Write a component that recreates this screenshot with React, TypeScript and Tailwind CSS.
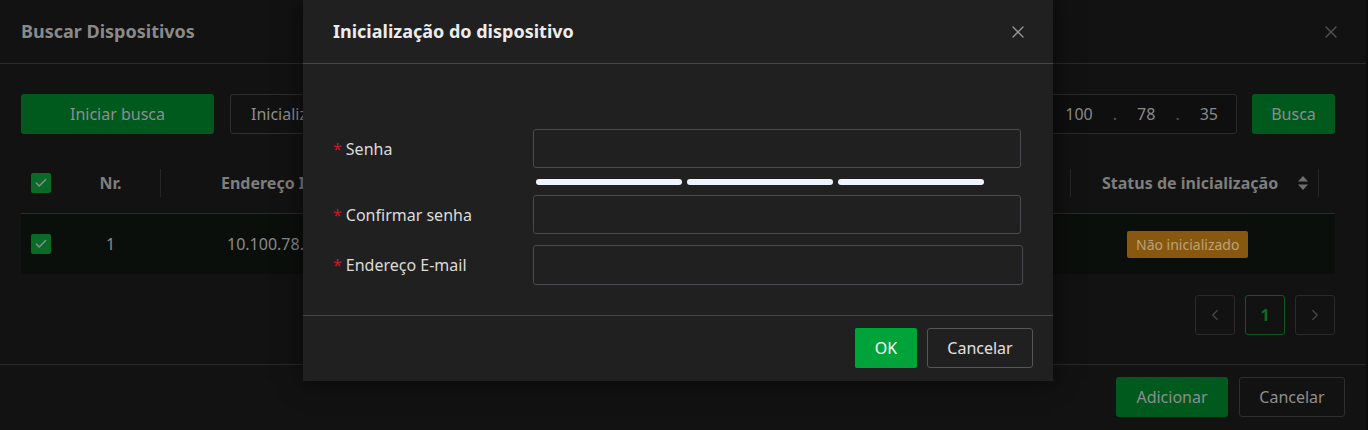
import { X, ChevronLeft, ChevronRight, Check } from 'lucide-react'

const font = { fontFamily: '"Noto Sans", "Segoe UI", Arial, sans-serif' }

function Checkbox() {
  return (
    <div className="flex h-[20px] w-[20px] items-center justify-center rounded-[2px] bg-[#0a6a28]">
      <Check className="h-[14px] w-[14px] text-[#8c8c8c]" strokeWidth={2.5} />
    </div>
  )
}

function SortIcon() {
  return (
    <svg viewBox="0 0 10 14" className="h-[14px] w-[10px]" fill="#6e6e6e">
      <path d="M5 0 L10 5.5 H0 Z" />
      <path d="M5 14 L10 8.5 H0 Z" />
    </svg>
  )
}

export default function App() {
  return (
    <div className="relative h-[430px] w-[1368px] overflow-hidden bg-[#0c0c0c]" style={font}>
      {/* ── Janela de fundo (escurecida) ── */}
      <div className="flex h-[430px] w-[1366px] flex-col bg-[#121212]">
        <div className="flex h-[64px] shrink-0 items-center justify-between border-b border-[#2b2b2b] pl-[21px] pr-[25px]">
          <h1 className="text-[18px] font-bold text-[#8a8a8a]">Buscar Dispositivos</h1>
          <X className="h-[20px] w-[20px] text-[#555]" strokeWidth={1.5} />
        </div>

        <div className="flex flex-1 flex-col pl-[21px] pr-[31px] pt-[30px]">
          {/* Toolbar */}
          <div className="flex h-[40px] items-center gap-[15px]">
            <button className="h-[40px] w-[193px] rounded-[3px] bg-[#005a1e] text-[16px] text-[#8e8e8e]">
              Iniciar busca
            </button>
            <button className="ml-[1px] h-[40px] w-[150px] rounded-[3px] border border-[#2e2e2e] px-[20px] text-left text-[16px] text-[#8e8e8e]">
              Inicializar
            </button>
            <div className="flex-1" />
            <div className="flex h-[40px] w-[300px] items-center justify-end gap-[20px] rounded-[3px] border border-[#2a2a2a] bg-[#0f0f0f] pr-[18px] text-[16px] text-[#8a8a8a]">
              <span>10</span>
              <span className="text-[#555]">.</span>
              <span>100</span>
              <span className="text-[#555]">.</span>
              <span>78</span>
              <span className="text-[#555]">.</span>
              <span>35</span>
            </div>
            <button className="h-[40px] w-[83px] rounded-[3px] bg-[#005a1e] text-[16px] text-[#8e8e8e]">Busca</button>
          </div>

          {/* Tabela */}
          <div className="mt-[26px]">
            <div className="flex h-[54px] items-center border-b border-[#2a2a2a] pb-[7px] text-[16px] font-bold text-[#7e7e7e]">
              <div className="flex w-[40px] justify-center">
                <Checkbox />
              </div>
              <div className="w-[99px] text-center">Nr.</div>
              <div className="h-[28px] w-px bg-[#262626]" />
              <div className="flex-1 pl-[60px]">Endereço IP</div>
              <div className="h-[28px] w-px bg-[#262626]" />
              <div className="flex w-[247px] items-center gap-[20px] pl-[31px]">
                <span>Status de inicialização</span>
                <SortIcon />
              </div>
              <div className="h-[28px] w-px bg-[#262626]" />
              <div className="w-[16px]" />
            </div>
            <div className="flex h-[60px] items-center bg-[#0b0f0c] text-[16px] text-[#8a8a8a]">
              <div className="flex w-[40px] justify-center">
                <Checkbox />
              </div>
              <div className="w-[99px] text-center">1</div>
              <div className="flex-1 pl-[67px]">10.100.78.35</div>
              <div className="flex w-[265px] justify-start pl-[57px]">
                <span className="rounded-[2px] bg-[#885810] px-[9px] py-[3px] text-[14px] text-[#bba27a]">
                  Não inicializado
                </span>
              </div>
            </div>
          </div>

          {/* Paginação */}
          <div className="mt-[21px] flex justify-end gap-[10px]">
            <div className="flex h-[40px] w-[40px] items-center justify-center rounded-[3px] border border-[#2a2a2a]">
              <ChevronLeft className="h-[18px] w-[18px] text-[#4a4a4a]" strokeWidth={1.5} />
            </div>
            <div className="flex h-[40px] w-[40px] items-center justify-center rounded-[3px] border border-[#0a5a22] text-[16px] font-bold text-[#0a6a26]">
              1
            </div>
            <div className="flex h-[40px] w-[40px] items-center justify-center rounded-[3px] border border-[#2a2a2a]">
              <ChevronRight className="h-[18px] w-[18px] text-[#4a4a4a]" strokeWidth={1.5} />
            </div>
          </div>
        </div>

        <div className="flex h-[66px] shrink-0 items-start justify-end gap-[11px] border-t border-[#2a2a2a] pr-[21px] pt-[12px]">
          <button className="h-[40px] w-[112px] rounded-[3px] bg-[#005a1e] text-[16px] text-[#8e8e8e]">Adicionar</button>
          <button className="h-[40px] w-[106px] rounded-[3px] border border-[#2e2e2e] text-[16px] text-[#8e8e8e]">
            Cancelar
          </button>
        </div>
      </div>

      {/* ── Modal inicialização ── */}
      <div className="absolute left-[303px] top-0 flex h-[381px] w-[750px] flex-col bg-[#202020] shadow-[0_0_24px_rgba(0,0,0,0.6)]">
        <div className="flex h-[64px] shrink-0 items-center justify-between border-b border-[#46464b] pl-[30px] pr-[25px]">
          <h2 className="text-[18px] font-bold text-[#ececec]">Inicialização do dispositivo</h2>
          <X className="h-[20px] w-[20px] text-[#9a9a9a]" strokeWidth={1.5} />
        </div>

        <div className="flex flex-1 flex-col px-[30px] pt-[65px]">
          <div className="flex items-center">
            <label className="flex w-[200px] items-center gap-[4px] text-[16px] text-[#dcdcdc]">
              <span className="text-[#c41a30]">*</span>Senha
            </label>
            <div className="h-[39px] w-[488px] rounded-[3px] border border-[#4a4a50]" />
          </div>
          <div className="ml-[203px] mt-[11px] flex gap-[5px]">
            <div className="h-[6px] w-[146px] rounded-full bg-[#eef4ff]" />
            <div className="h-[6px] w-[146px] rounded-full bg-[#eef4ff]" />
            <div className="h-[6px] w-[146px] rounded-full bg-[#eef4ff]" />
          </div>
          <div className="mt-[10px] flex items-center">
            <label className="flex w-[200px] items-center gap-[4px] text-[16px] text-[#dcdcdc]">
              <span className="text-[#c41a30]">*</span>Confirmar senha
            </label>
            <div className="h-[39px] w-[488px] rounded-[3px] border border-[#4a4a50]" />
          </div>
          <div className="mt-[11px] flex items-center">
            <label className="flex w-[200px] items-center gap-[4px] text-[16px] text-[#dcdcdc]">
              <span className="text-[#c41a30]">*</span>Endereço E-mail
            </label>
            <div className="h-[40px] w-[490px] rounded-[3px] border border-[#4a4a50]" />
          </div>
        </div>

        <div className="flex h-[66px] shrink-0 items-start justify-end gap-[10px] border-t border-[#46464b] pr-[20px] pt-[12px]">
          <button className="h-[40px] w-[62px] rounded-[2px] bg-[#00a33a] text-[16px] text-white">OK</button>
          <button className="h-[40px] w-[106px] rounded-[3px] border border-[#55555a] text-[16px] text-[#e0e0e0]">
            Cancelar
          </button>
        </div>
      </div>
    </div>
  )
}
